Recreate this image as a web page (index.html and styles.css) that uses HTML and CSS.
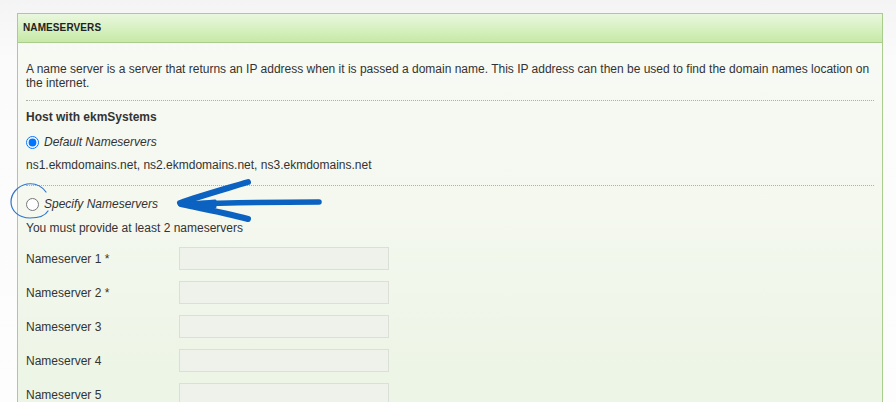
FILE: index.html
```html
<!DOCTYPE html>
<html>
<head>
<meta charset="utf-8">
<link rel="stylesheet" href="styles.css">
</head>
<body>
<div class="panel">
  <div class="panel-head">NAMESERVERS</div>
  <div class="panel-body">
    <p class="intro">A name server is a server that returns an IP address when it is passed a domain name. This IP address can then be used to find the domain names location on the internet.</p>
    <div class="sep"></div>
    <div class="heading">Host with ekmSystems</div>
    <label class="radio-row first"><input type="radio" name="ns" checked><span>Default Nameservers</span></label>
    <div class="ns-list">ns1.ekmdomains.net, ns2.ekmdomains.net, ns3.ekmdomains.net</div>
    <div class="sep sep2"></div>
    <label class="radio-row second"><input type="radio" name="ns"><span>Specify Nameservers</span></label>
    <div class="note">You must provide at least 2 nameservers</div>
    <div class="fields">
      <div class="field"><span class="lbl">Nameserver 1 *</span><input type="text" class="inp"></div>
      <div class="field"><span class="lbl">Nameserver 2 *</span><input type="text" class="inp"></div>
      <div class="field"><span class="lbl">Nameserver 3</span><input type="text" class="inp"></div>
      <div class="field"><span class="lbl">Nameserver 4</span><input type="text" class="inp"></div>
      <div class="field"><span class="lbl">Nameserver 5</span><input type="text" class="inp"></div>
    </div>
  </div>
</div>
<svg class="annot" width="896" height="402" viewBox="0 0 896 402">
  <path d="M46 192 C41 185 34 183 27 184 C17 186 11 194 11 202 C11 211 19 218 30 218 C38 218 45 216 48 211" fill="none" stroke="#2f74cc" stroke-width="1.2" stroke-linecap="round"/>
  <g fill="none" stroke="#0b62c1" stroke-linecap="round" stroke-linejoin="round">
    <path d="M319 202 C270 202 220 203 181 204" stroke-width="5.5"/>
    <path d="M248 182 C225 189 200 196 180 203" stroke-width="6"/>
    <path d="M248 219 C226 213 200 208 181 204" stroke-width="6"/>
    <path d="M180 204 L215 201 L215 207 Z" fill="#0b62c1" stroke-width="3"/>
  </g>
</svg>
</body>
</html>
```
FILE: styles.css
```css
html, body {
  margin: 0;
  padding: 0;
}
body {
  position: relative;
  width: 896px;
  height: 402px;
  overflow: hidden;
  background: linear-gradient(#f4f4f4, #fbfbfb 60px, #fdfdfd);
  font-family: "Liberation Sans", Arial, sans-serif;
  font-size: 12px;
  color: #333;
}
.panel {
  margin: 13px 0 0 17px;
  width: 864px;
  border: 1px solid #a9cd8d;
  border-bottom: none;
  background: linear-gradient(#f8faf5, #f4f8ef 200px, #edf5e6 360px);
}
.panel-head {
  height: 28px;
  line-height: 28px;
  padding-left: 5px;
  font-size: 10px;
  font-weight: bold;
  color: #222;
  letter-spacing: 0.1px;
  background: linear-gradient(#e9f8de, #c7e9a7);
  border-bottom: 1px solid #a9cd8d;
}
.panel-body {
  padding: 19px 8px 0 8px;
}
.intro {
  margin: 0;
  line-height: 14px;
}
.sep {
  margin-top: 10px;
  border-top: 1px dotted #a9b49a;
}
.sep2 {
  margin-top: 13px;
}
.heading {
  margin-top: 9px;
  line-height: 14px;
  font-weight: bold;
}
.radio-row {
  display: flex;
  align-items: center;
  height: 16px;
  font-style: italic;
}
.radio-row.first {
  margin-top: 10px;
}
.radio-row.second {
  margin-top: 10px;
}
.radio-row input {
  width: 13px;
  height: 13px;
  margin: 0 5px 0 0;
}
.ns-list {
  margin-top: 8px;
  line-height: 14px;
}
.note {
  margin-top: 9px;
  line-height: 14px;
}
.fields {
  margin-top: 12px;
  display: flex;
  flex-direction: column;
  gap: 11px;
}
.field {
  display: flex;
  align-items: center;
  height: 23px;
}
.lbl {
  width: 153px;
}
.inp {
  box-sizing: border-box;
  width: 210px;
  height: 23px;
  margin: 0;
  border: 1px solid #dcdfd7;
  background: #eff1eb;
  border-radius: 0;
  padding: 2px 4px;
}
.annot {
  position: absolute;
  left: 0;
  top: 0;
  pointer-events: none;
}
```
